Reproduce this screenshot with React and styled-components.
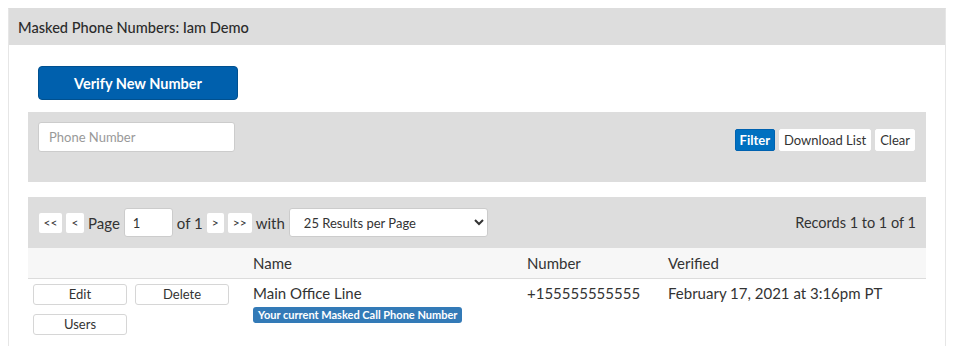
import React from "react";
import styled, { createGlobalStyle } from "styled-components";

const Global = createGlobalStyle`
  body { margin: 8px; font-family: Lato, "Noto Sans", sans-serif; color: #333; background: #fff; }
  * { box-sizing: border-box; }
`;

const Panel = styled.div`
  width: 938px;
  border: 1px solid #e6e6e6;
  border-top-color: #dddddd;
  border-bottom: none;
  min-height: 340px;
`;

const PanelHeader = styled.div`
  background: #dddddd;
  height: 36px;
  padding: 0 9px;
  display: flex;
  align-items: center;
  font-size: 14.6px;
  font-weight: 500;
  color: #2b2b2b;
`;

const Body = styled.div`
  padding: 21px 19px 0 19px;
`;

const PrimaryButton = styled.button`
  margin-left: 10px;
  width: 200px;
  height: 34px;
  background: #0060ad;
  border: 1px solid #00508f;
  border-radius: 4px;
  color: #fff;
  font-family: inherit;
  font-size: 14.5px;
  font-weight: 700;
  cursor: pointer;
`;

const GrayBar = styled.div`
  background: #dddddd;
  display: flex;
  justify-content: space-between;
  align-items: ${(p) => p.$align || "flex-start"};
  padding: ${(p) => p.$pad};
  height: ${(p) => p.$h}px;
  margin-top: ${(p) => p.$mt}px;
`;

const TextInput = styled.input`
  width: 197px;
  height: 30px;
  border: 1px solid #ccc;
  border-radius: 3px;
  padding: 0 10px;
  font-family: inherit;
  font-size: 13px;
  color: #333;
  background: #fff;
  &::placeholder { color: #999; }
`;

const BtnGroup = styled.div`
  display: flex;
  gap: 4px;
  margin-top: 7px;
`;

const SmallBtn = styled.button`
  height: 22px;
  padding: 0 4px;
  border: 1px solid ${(p) => (p.$primary ? "#0062b0" : "#fff")};
  border-radius: 2px;
  background: ${(p) => (p.$primary ? "#0070c0" : "#fff")};
  color: ${(p) => (p.$primary ? "#fff" : "#333")};
  font-family: inherit;
  font-size: 13px;
  font-weight: ${(p) => (p.$primary ? 700 : 400)};
  cursor: pointer;
`;

const Pager = styled.div`
  display: flex;
  align-items: center;
  gap: 4px;
  font-size: 15px;
  color: #333;
`;

const PageBtn = styled.button`
  height: 20px;
  min-width: ${(p) => p.$w}px;
  padding: 0;
  border: none;
  border-radius: 2px;
  background: #fff;
  color: #333;
  font-family: inherit;
  font-size: 12px;
`;

const PageInput = styled.input`
  width: 49px;
  height: 29px;
  border: 1px solid #ccc;
  border-radius: 3px;
  padding: 0 8px;
  font-family: inherit;
  font-size: 13px;
  color: #333;
`;

const Select = styled.select`
  width: 199px;
  height: 29px;
  border: 1px solid #ccc;
  border-radius: 3px;
  padding: 0 8px 0 10px;
  font-family: inherit;
  font-size: 13px;
  color: #333;
  background: #fff;
`;

const Records = styled.div`
  font-size: 14.5px;
  color: #333;
`;

const Table = styled.table`
  width: 100%;
  border-collapse: collapse;
  font-size: 15px;
`;

const Th = styled.th`
  text-align: left;
  font-weight: 400;
  height: 30px;
  padding: 0 5px;
  background: #f7f7f7;
  border-bottom: 1px solid #dcdcdc;
  width: ${(p) => (p.$w ? p.$w + "px" : "auto")};
`;

const Td = styled.td`
  vertical-align: top;
  padding: 5px 5px;
`;

const Actions = styled.div`
  display: grid;
  grid-template-columns: 94px 94px;
  column-gap: 8px;
  row-gap: 9px;
`;

const RowBtn = styled.button`
  height: 21px;
  border: 1px solid #d6d6d6;
  border-radius: 3px;
  background: #fff;
  color: #333;
  font-family: inherit;
  font-size: 13px;
`;

const Name = styled.div`
  line-height: 18px;
  margin-bottom: 2px;
`;

const Badge = styled.span`
  display: inline-block;
  background: #337ab7;
  color: #fff;
  font-size: 11px;
  font-weight: 700;
  border-radius: 3px;
  padding: 1px 5px;
  line-height: 14px;
`;

export default function App() {
  return (
    <>
      <Global />
      <Panel>
        <PanelHeader>Masked Phone Numbers: Iam Demo</PanelHeader>
        <Body>
          <PrimaryButton>Verify New Number</PrimaryButton>
          <GrayBar $pad="10px 11px 0 10px" $h={70} $mt={12}>
            <TextInput placeholder="Phone Number" />
            <BtnGroup>
              <SmallBtn $primary>Filter</SmallBtn>
              <SmallBtn>Download List</SmallBtn>
              <SmallBtn>Clear</SmallBtn>
            </BtnGroup>
          </GrayBar>
          <GrayBar $pad="0 10px 0 11px" $h={51} $mt={15} $align="center">
            <Pager>
              <PageBtn $w={23}>&lt;&lt;</PageBtn>
              <PageBtn $w={18}>&lt;</PageBtn>
              <span>Page</span>
              <PageInput defaultValue="1" />
              <span>of 1</span>
              <PageBtn $w={17}>&gt;</PageBtn>
              <PageBtn $w={24}>&gt;&gt;</PageBtn>
              <span>with</span>
              <Select defaultValue="25">
                <option value="25">25 Results per Page</option>
              </Select>
            </Pager>
            <Records>Records 1 to 1 of 1</Records>
          </GrayBar>
          <Table>
            <thead>
              <tr>
                <Th $w={220}></Th>
                <Th $w={274}>Name</Th>
                <Th $w={141}>Number</Th>
                <Th>Verified</Th>
              </tr>
            </thead>
            <tbody>
              <tr>
                <Td>
                  <Actions>
                    <RowBtn>Edit</RowBtn>
                    <RowBtn>Delete</RowBtn>
                    <RowBtn>Users</RowBtn>
                  </Actions>
                </Td>
                <Td>
                  <Name>Main Office Line</Name>
                  <Badge>Your current Masked Call Phone Number</Badge>
                </Td>
                <Td>+155555555555</Td>
                <Td>February 17, 2021 at 3:16pm PT</Td>
              </tr>
            </tbody>
          </Table>
        </Body>
      </Panel>
    </>
  );
}
